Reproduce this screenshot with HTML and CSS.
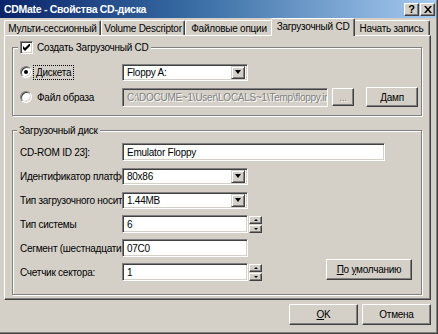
FILE: index.html
```html
<!DOCTYPE html>
<html>
<head>
<meta charset="utf-8">
<link rel="stylesheet" href="styles.css">
</head>
<body>
<div class="window">
  <div class="titlebar">
    <span class="title">CDMate - Свойства CD-диска</span>
    <div class="caption-btns">
      <span class="cbtn help">?</span>
      <span class="cbtn close"><svg width="8" height="7" viewBox="0 0 8 7"><path d="M0 0h2l2 2.4L6 0h2L5 3.5 8 7H6L4 4.6 2 7H0l3-3.5z" fill="#000"/></svg></span>
    </div>
  </div>
  <div class="content">
    <div class="tabs">
      <div class="tab t1"><span>Мульти-сессионный</span></div>
      <div class="tab t2"><span>Volume Descriptor</span></div>
      <div class="tab t3"><span>Файловые опции</span></div>
      <div class="tab active"><span>Загрузочный CD</span></div>
      <div class="tab t5"><span>Начать запись</span></div>
    </div>
    <div class="panel">
      <div class="group g1">
        <div class="legend chk-legend">
          <span class="check"><svg width="7" height="7" viewBox="0 0 7 7"><path d="M0 2v3l2 2 5-5V-1L2 4z" fill="#000"/></svg></span>
          <span>Создать Загрузочный CD</span>
        </div>
        <div class="row r1">
          <div class="opt"><span class="radio on"></span><span class="focus">Дискета</span></div>
          <div class="combo"><span class="val">Floppy A:</span><span class="arrow"><i class="tri"></i></span></div>
        </div>
        <div class="row r2">
          <div class="opt"><span class="radio"></span><span class="olabel">Файл образа</span></div>
          <div class="edit disabled path"><span>C:\DOCUME~1\User\LOCALS~1\Temp\floppy.img</span></div>
          <div class="btn browse"><span>...</span></div>
          <div class="btn dump"><span><u>Д</u>амп</span></div>
        </div>
      </div>
      <div class="group g2">
        <div class="legend">Загрузочный диск</div>
        <div class="frow">
          <div class="flabel">CD-ROM ID 23]:</div>
          <div class="edit wide">Emulator Floppy</div>
        </div>
        <div class="frow">
          <div class="flabel">Идентификатор платформы</div>
          <div class="combo"><span class="val">80x86</span><span class="arrow"><i class="tri"></i></span></div>
        </div>
        <div class="frow">
          <div class="flabel">Тип загрузочного носителя</div>
          <div class="combo"><span class="val">1.44MB</span><span class="arrow"><i class="tri"></i></span></div>
        </div>
        <div class="frow">
          <div class="flabel">Тип системы</div>
          <div class="edit num">6</div>
          <div class="spin"><span class="sbtn"><i class="up"></i></span><span class="sbtn"><i class="down"></i></span></div>
        </div>
        <div class="frow">
          <div class="flabel">Сегмент (шестнадцатиричный)</div>
          <div class="edit num">07C0</div>
        </div>
        <div class="frow">
          <div class="flabel">Счетчик сектора:</div>
          <div class="edit num">1</div>
          <div class="spin"><span class="sbtn"><i class="up"></i></span><span class="sbtn"><i class="down"></i></span></div>
          <div class="btn defaults"><span><u>П</u>о <u>у</u>молчанию</span></div>
        </div>
      </div>
    </div>
    <div class="footer">
      <div class="btn dlg"><span><u>O</u>K</span></div>
      <div class="btn dlg"><span>Отмена</span></div>
    </div>
  </div>
</div>
</body>
</html>
```

FILE: styles.css
```css
* { box-sizing: border-box; }
html, body { margin: 0; padding: 0; }
body {
  width: 438px;
  height: 334px;
  overflow: hidden;
  background: #d4d0c8;
  font-family: "Liberation Sans", Arial, sans-serif;
  font-size: 10px;
  letter-spacing: -0.25px;
  color: #000;
}
.window {
  width: 438px;
  height: 334px;
  border-right: 1px solid #404040;
  border-bottom: 1px solid #404040;
  box-shadow: inset -1px -1px 0 #808080;
  display: flex;
  flex-direction: column;
}
.titlebar {
  height: 18px;
  margin-right: 1px;
  display: flex;
  align-items: center;
  padding: 0 1px 0 4px;
  background: linear-gradient(to right, #0a246a 0%, #3a6ea5 45%, #a6caf0 100%);
}
.title {
  flex: 1;
  color: #fff;
  font-weight: bold;
  font-size: 10.5px;
  letter-spacing: -0.3px;
  white-space: nowrap;
}
.caption-btns { display: flex; gap: 1px; }
.cbtn {
  width: 15px;
  height: 13px;
  display: flex;
  align-items: center;
  justify-content: center;
  background: #d4d0c8;
  border: 1px solid;
  border-color: #fff #404040 #404040 #fff;
  box-shadow: inset -1px -1px 0 #808080;
  font-weight: bold;
  font-size: 11px;
  line-height: 1;
}
.content {
  flex: 1;
  display: flex;
  flex-direction: column;
  padding: 0 6px 0 4px;
}
.tabs {
  height: 17px;
  display: flex;
  align-items: flex-end;
}
.tab {
  height: 15px;
  border: 1px solid;
  border-bottom: none;
  border-color: #fff #404040 transparent #fff;
  box-shadow: inset -1px 0 0 #808080;
  border-radius: 2px 2px 0 0;
  display: flex;
  align-items: center;
  justify-content: center;
  white-space: nowrap;
  overflow: hidden;
}
.t1 { width: 97px; }
.t2 { width: 84px; }
.t3 { width: 88px; }
.t5 { width: 77px; }
.tab.active {
  width: 84px;
  height: 18px;
  margin: 0 -2px -1px -2px;
  position: relative;
  z-index: 1;
  background: #d4d0c8;
  padding-bottom: 2px;
}
.panel {
  height: 265px;
  border: 1px solid;
  border-color: #fff #404040 #404040 #fff;
  box-shadow: inset -1px -1px 0 #808080;
  padding: 11px 0 0 7px;
  display: flex;
  flex-direction: column;
  gap: 14px;
}
.group {
  position: relative;
  width: 410px;
  border: 1px solid #808080;
  box-shadow: inset 1px 1px 0 #fff, 1px 1px 0 #fff;
}
.g1 { height: 69px; padding: 15px 0 0 0; }
.g2 { height: 165px; padding: 9px 0 0 0; }
.legend {
  position: absolute;
  top: -7px;
  left: 4px;
  height: 13px;
  padding: 0 2px;
  background: #d4d0c8;
  display: flex;
  align-items: center;
  white-space: nowrap;
}
.chk-legend { left: 5px; gap: 4px; }
.check {
  width: 13px;
  height: 13px;
  background: #fff;
  border: 1px solid;
  border-color: #808080 #fff #fff #808080;
  box-shadow: inset 1px 1px 0 #404040, inset -1px -1px 0 #d4d0c8;
  display: flex;
  align-items: center;
  justify-content: center;
}
.row { display: flex; align-items: center; }
.r1 { height: 18px; }
.r2 { height: 20px; margin-top: 6px; }
.opt {
  width: 109px;
  padding-left: 7px;
  display: flex;
  align-items: center;
  gap: 2px;
  white-space: nowrap;
}
.radio {
  width: 12px;
  height: 12px;
  border-radius: 50%;
  background: #fff;
  border: 1px solid;
  border-color: #808080 #fff #fff #808080;
  box-shadow: inset 1px 1px 0 #404040, inset -1px -1px 0 #d4d0c8;
  display: flex;
  align-items: center;
  justify-content: center;
  flex: none;
}
.radio.on::after {
  content: "";
  width: 4px;
  height: 4px;
  border-radius: 50%;
  background: #000;
}
.focus {
  outline: 1px dotted #000;
  padding: 1px 2px;
}
.olabel { padding-left: 3px; }
.combo, .edit {
  height: 18px;
  background: #fff;
  border: 1px solid;
  border-color: #808080 #fff #fff #808080;
  box-shadow: inset 1px 1px 0 #404040, inset -1px -1px 0 #d4d0c8;
  display: flex;
  align-items: center;
  white-space: nowrap;
  overflow: hidden;
}
.combo {
  width: 126px;
  height: 17px;
  padding: 2px;
}
.combo .val { flex: 1; padding-left: 2px; }
.arrow {
  width: 14px;
  height: 13px;
  background: #d4d0c8;
  border: 1px solid;
  border-color: #d4d0c8 #404040 #404040 #d4d0c8;
  box-shadow: inset 1px 1px 0 #fff, inset -1px -1px 0 #808080;
  display: flex;
  align-items: center;
  justify-content: center;
}
.tri {
  width: 0;
  height: 0;
  border-left: 3.5px solid transparent;
  border-right: 3.5px solid transparent;
  border-top: 4px solid #000;
}
.edit { padding-left: 4px; }
.path {
  width: 206px;
  height: 19px;
  background: #d4d0c8;
  color: #808080;
  text-shadow: 1px 1px 0 #fff;
}
.path span { overflow: hidden; }
.btn {
  background: #d4d0c8;
  border: 1px solid;
  border-color: #fff #404040 #404040 #fff;
  box-shadow: inset -1px -1px 0 #808080;
  display: flex;
  align-items: center;
  justify-content: center;
  white-space: nowrap;
}
.browse {
  width: 22px;
  height: 18px;
  margin-left: 4px;
  color: #808080;
  text-shadow: 1px 1px 0 #fff;
}
.dump {
  width: 52px;
  height: 20px;
  margin-left: 12px;
}
.frow {
  height: 24px;
  display: flex;
  align-items: center;
}
.flabel {
  width: 109px;
  padding-left: 7px;
  white-space: nowrap;
  overflow: hidden;
}
.wide { width: 263px; }
.num { width: 126px; }
.spin {
  display: flex;
  flex-direction: column;
  gap: 1px;
  margin-left: 1px;
}
.sbtn {
  width: 13px;
  height: 8px;
  background: #d4d0c8;
  border: 1px solid;
  border-color: #fff #404040 #404040 #fff;
  box-shadow: inset -1px -1px 0 #808080;
  display: flex;
  align-items: center;
  justify-content: center;
}
.sbtn .up {
  width: 0; height: 0;
  border-left: 2px solid transparent;
  border-right: 2px solid transparent;
  border-bottom: 2px solid #000;
}
.sbtn .down {
  width: 0; height: 0;
  border-left: 2px solid transparent;
  border-right: 2px solid transparent;
  border-top: 2px solid #000;
}
.defaults {
  width: 86px;
  height: 21px;
  margin-left: auto;
  margin-right: 9px;
  margin-top: -5px;
}
.footer {
  display: flex;
  justify-content: flex-end;
  gap: 4px;
  margin-top: 4px;
}
.dlg { width: 69px; height: 21px; }
```
